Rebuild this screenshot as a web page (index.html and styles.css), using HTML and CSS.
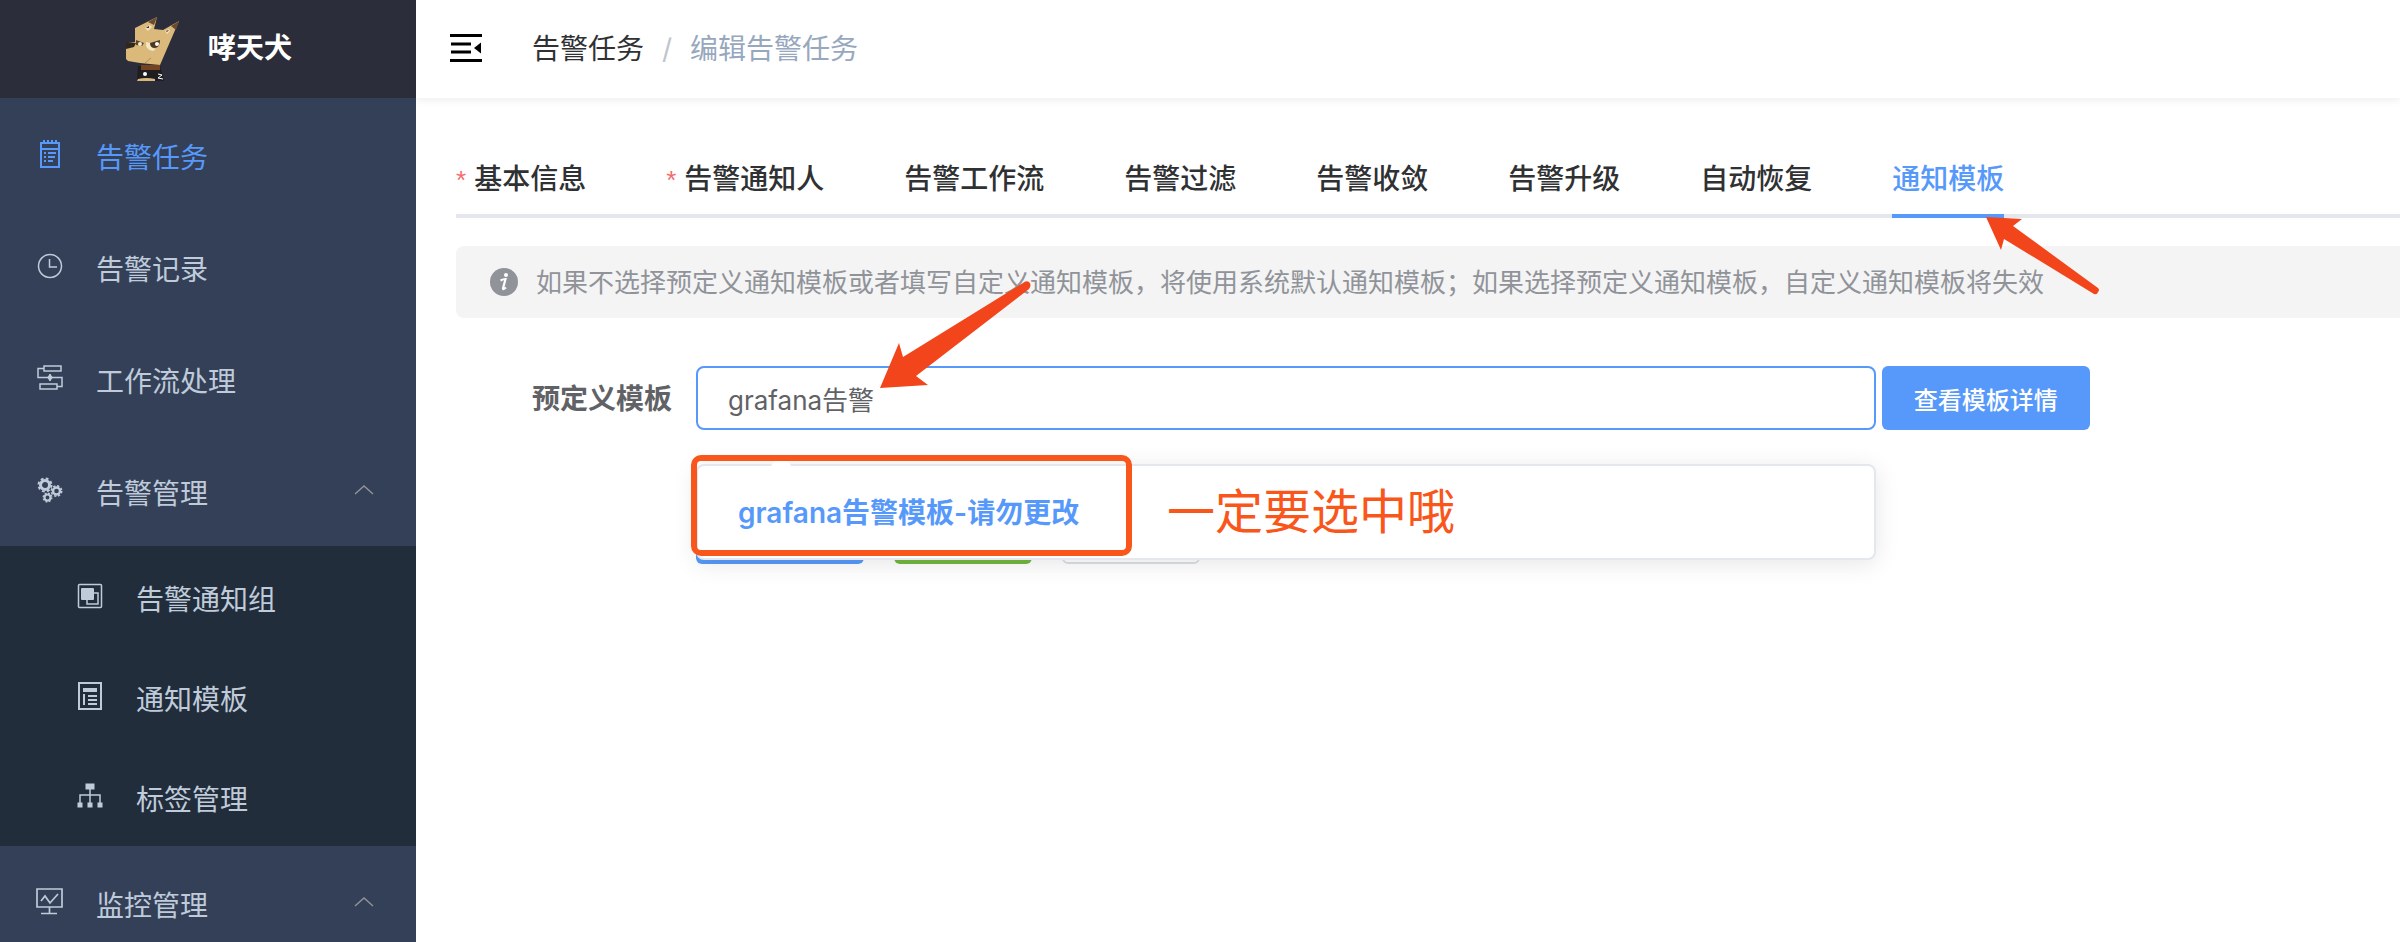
FILE: index.html
```html
<!DOCTYPE html>
<html lang="zh-CN">
<head>
    <meta charset="UTF-8">
    <meta name="viewport" content="width=device-width, initial-scale=1.0">
    <title>编辑告警任务</title>
    <link rel="stylesheet" href="styles.css">
</head>
<body>
    <div class="app">
        <aside class="sidebar">
            <div class="logo">
                <svg class="logo-img" width="54" height="64" viewBox="0 0 54 64">
                    <path d="M12 49h22l4 15H11z" fill="#1f1d20"/>
                    <path d="M12 62q8-2 17 0v2H11z" fill="#d8b77b"/>
                    <path d="M9 11L31 0l-3 12 9 1L53 4 34 48 14 46 2 44 0 42V26l9-1z" fill="#dab97a"/>
                    <path d="M31 0l-9 5 6 3zM53 4l-8 5 5 4z" fill="#6b4b2f"/>
                    <path d="M19 11l5-3 2 2-4 4zM39 14l4-2 1 2-3 3z" fill="#efe0bb"/>
                    <path d="M20 11l3-2v2zM40 14l3-1-2 2z" fill="#2c2b36"/>
                    <path d="M0 25l10 1-2 4-8 2z" fill="#2f261e"/>
                    <path d="M10 23l8 3-2 3-6-1z" fill="#5c452c"/>
                    <circle cx="14" cy="27" r="2" fill="#f4ebcb"/>
                    <path d="M20 25q-1 8 7 9l3-2q-6-1-6-6z" fill="#f2e7c2"/>
                    <path d="M24 26l10-3q0 7-5 8-5 0-5-5z" fill="#4b3724"/>
                    <circle cx="31" cy="27" r="2" fill="#fff"/>
                    <path d="M19 46l6-5" stroke="#b08d58" fill="none"/>
                    <path d="M15 48h19v5H15z" fill="#75431f"/>
                    <circle cx="19" cy="57" r="2" fill="#fff"/>
                    <path d="M32 57l4 1-4 3 5 1" stroke="#fff" fill="none"/>
                </svg>
                <h1 class="logo-title">哮天犬</h1>
            </div>
            <nav class="menu">
                <a class="menu-item active" href="#">
                    <svg class="icon" viewBox="0 0 28 28" fill="none" stroke="currentColor" stroke-width="2">
                        <path d="M5 3h18v24H5zM5 9h18M8 0v4M12 0v4M16 0v4M20 0v4"/>
                        <path d="M8 13h2M12 13h8M8 17h2M12 17h7M8 21h2M12 21h5"/>
                    </svg>
                    <span>告警任务</span>
                </a>
                <a class="menu-item" href="#">
                    <svg class="icon" viewBox="0 0 28 28" fill="none" stroke="currentColor" stroke-width="1.5">
                        <circle cx="14" cy="14" r="11.500"/>
                        <path d="M13.500 7v8H21"/>
                    </svg>
                    <span>告警记录</span>
                </a>
                <a class="menu-item" href="#">
                    <svg class="icon" viewBox="0 0 28 28" fill="none" stroke="currentColor" stroke-width="1.5">
                        <path d="M8 2h17v5H8zM4 20h17v5H4zM8 4.500H2v9h24v9h-5M14 10v7"/>
                        <path d="M14 11l2 2.500-2 2.500-2-2.500z" fill="currentColor"/>
                    </svg>
                    <span>工作流处理</span>
                </a>
                <a class="menu-item" href="#">
                    <svg class="icon" viewBox="0 0 28 28" fill="none" stroke="currentColor">
                        <circle cx="9" cy="9" r="4.500" stroke-width="3"/>
                        <circle cx="9" cy="9" r="6.500" stroke-width="2" stroke-dasharray="2.800 2.300"/>
                        <circle cx="20.500" cy="15" r="3.500" stroke-width="2.400"/>
                        <circle cx="20.500" cy="15" r="5.200" stroke-width="1.600" stroke-dasharray="2.300 1.780"/>
                        <circle cx="11.500" cy="21.500" r="2.900" stroke-width="2"/>
                        <circle cx="11.500" cy="21.500" r="4.300" stroke-width="1.400" stroke-dasharray="1.900 1.470"/>
                    </svg>
                    <span>告警管理</span>
                    <svg class="arrow-up" viewBox="0 0 20 12" fill="none" stroke="#909399" stroke-width="1.500"><path d="M1 10l9-8 9 8"/></svg>
                </a>
                <div class="submenu">
                    <a class="menu-item" href="#">
                        <svg class="icon" viewBox="0 0 28 28" fill="none" stroke="currentColor" stroke-width="1.500">
                            <rect x="2.500" y="2.500" width="23" height="23" rx="1"/>
                            <rect x="5" y="6" width="13" height="12" rx="1" fill="currentColor" stroke="none"/>
                            <path d="M18 11h4v11H11v-4"/>
                        </svg>
                        <span>告警通知组</span>
                    </a>
                    <a class="menu-item" href="#">
                        <svg class="icon" viewBox="0 0 28 28" fill="none" stroke="currentColor" stroke-width="2">
                            <path d="M3 1h22v26H3z"/>
                            <path d="M7 8h14" stroke-width="4"/>
                            <path d="M8 12v11M12 14h9M12 18h9M12 22h9"/>
                        </svg>
                        <span>通知模板</span>
                    </a>
                    <a class="menu-item" href="#">
                        <svg class="icon" viewBox="0 0 28 28" fill="none" stroke="currentColor" stroke-width="1.500">
                            <path d="M14 7v14M4 21v-8h20v8"/>
                            <path d="M9.500 1.500h9v6h-9zM1.500 20.500h5v5h-5zM11.500 20.500h5v5h-5zM21.500 20.500h5v5h-5z" fill="currentColor" stroke="none"/>
                        </svg>
                        <span>标签管理</span>
                    </a>
                </div>
                <a class="menu-item" href="#">
                    <svg class="icon" viewBox="0 0 28 28" fill="none" stroke="currentColor" stroke-width="1.700">
                        <path d="M1 1h25v18H1zM13.500 19v6M5 25.500h16M5 13l4-5 5 7 8-9"/>
                    </svg>
                    <span>监控管理</span>
                    <svg class="arrow-up" viewBox="0 0 20 12" fill="none" stroke="#909399" stroke-width="1.500"><path d="M1 10l9-8 9 8"/></svg>
                </a>
            </nav>
        </aside>

        <main class="main">
            <header class="navbar">
                <button type="button" class="hamburger" aria-label="菜单">
                    <svg width="32" height="28" viewBox="0 0 32 28" fill="none" stroke="#000" stroke-width="3">
                        <path d="M0 1.500h32M1 10h20M1 18h20M0 26.500h32"/>
                        <path d="M24 14l7-5.500v11z" fill="#000" stroke="none"/>
                    </svg>
                </button>
                <div class="breadcrumb">
                    <a href="#">告警任务</a>
                    <span class="separator">/</span>
                    <span class="current">编辑告警任务</span>
                </div>
            </header>

            <section class="content">
                <div class="tabs">
                    <a class="tab required" href="#">基本信息</a>
                    <a class="tab required" href="#">告警通知人</a>
                    <a class="tab" href="#">告警工作流</a>
                    <a class="tab" href="#">告警过滤</a>
                    <a class="tab" href="#">告警收敛</a>
                    <a class="tab" href="#">告警升级</a>
                    <a class="tab" href="#">自动恢复</a>
                    <a class="tab active" href="#">通知模板</a>
                </div>

                <div class="alert">
                    <svg width="28" height="28" viewBox="0 0 28 28">
                        <circle cx="14" cy="14" r="14" fill="#909399"/>
                        <circle cx="16" cy="7" r="2" fill="#fff"/>
                        <path d="M10.500 12.500q3-1.500 5-1.500l-2.500 9.500q0 1.500 3-1" fill="none" stroke="#fff" stroke-width="2.200"/>
                    </svg>
                    <p>如果不选择预定义通知模板或者填写自定义通知模板，将使用系统默认通知模板；如果选择预定义通知模板，自定义通知模板将失效</p>
                </div>

                <form class="form">
                    <div class="form-item">
                        <label for="template">预定义模板</label>
                        <div class="select">
                            <input type="text" id="template" class="select-input" value="grafana告警">
                            <div class="dropdown">
                                <div class="option">grafana告警模板-请勿更改</div>
                            </div>
                            <div class="mark-box"></div>
                            <div class="mark-text">一定要选中哦</div>
                            <svg class="mark-arrow mark-arrow-input" width="152" height="110" viewBox="0 0 152 110">
                                <path d="M0 108l19-45 4 14L143 3q3-3 6-1 3 3 0 7L36 96l12 9z" fill="#f3451b"/>
                            </svg>
                        </div>
                        <button type="button" class="btn btn-primary">查看模板详情</button>
                    </div>
                    <div class="form-actions">
                        <button type="button" class="btn btn-primary btn-wide"></button>
                        <button type="button" class="btn btn-success"></button>
                        <button type="button" class="btn btn-default"></button>
                    </div>
                </form>
                <svg class="mark-arrow mark-arrow-tab" width="114" height="78" viewBox="0 0 114 78">
                    <path d="M0 0l36 2-9 7 85 62q2 2 0 4-1 3-4 2L18 22l-3 11z" fill="#f3451b"/>
                </svg>
            </section>
        </main>
    </div>
</body>
</html>
```

FILE: styles.css
```css
* {
    margin: 0;
    padding: 0;
    box-sizing: border-box;
}

body {
    height: 100vh;
    overflow: hidden;
    background-color: #fff;
    font-family: Inter, "Noto Sans CJK SC", sans-serif;
    font-size: 28px;
    color: #303133;
}

a {
    color: inherit;
    text-decoration: none;
}

button,
input {
    font-family: inherit;
}

.app {
    display: flex;
    height: 100vh;
}

/* 侧边栏 */
.sidebar {
    flex: none;
    width: 416px;
    overflow: hidden;
    background-color: #344058;
}

.logo {
    display: flex;
    justify-content: center;
    align-items: center;
    gap: 28px;
    height: 98px;
    padding-left: 2px;
    background-color: #2b2d3a;
}

.logo-title {
    padding-bottom: 2px;
    font-size: 28px;
    font-weight: 600;
    line-height: 40px;
    color: #fff;
}

.menu-item {
    display: flex;
    align-items: center;
    height: 112px;
    padding: 0 42px 0 36px;
    color: #bfcbd9;
}

.menu-item span {
    margin-left: 32px;
    padding-top: 8px;
    line-height: 40px;
}

.menu-item.active {
    color: #5799fa;
}

.icon {
    flex: none;
    width: 28px;
    height: 28px;
}

.arrow-up {
    width: 20px;
    height: 12px;
    margin-left: auto;
}

.submenu {
    background-color: #222d3c;
}

.submenu .menu-item {
    height: 100px;
    padding-left: 76px;
}

/* 顶部导航 */
.main {
    flex: 1;
    min-width: 0;
}

.navbar {
    display: flex;
    align-items: center;
    gap: 50px;
    height: 98px;
    padding: 0 34px 2px;
    box-shadow: 0 2px 8px rgba(0, 21, 41, 0.08);
}

.hamburger {
    display: flex;
    border: none;
    background: none;
}

.breadcrumb {
    display: flex;
    align-items: baseline;
    gap: 18px;
    padding-top: 2px;
    line-height: 40px;
}

.separator {
    color: #c0c4cc;
}

.current {
    color: #97a8be;
}

/* 标签页 */
.content {
    position: relative;
    padding: 40px 0 0 40px;
}

.tabs {
    display: flex;
    gap: 80px;
    height: 80px;
    border-bottom: 4px solid #e4e7ed;
}

.tab {
    height: 80px;
    line-height: 82px;
    font-weight: 500;
}

.tab.active {
    border-bottom: 4px solid #5799fa;
    color: #5799fa;
}

.tab.required::before {
    content: "*";
    margin-right: 8px;
    font-family: "Liberation Sans", sans-serif;
    font-size: 26px;
    color: #f56c6c;
}

.alert {
    display: flex;
    align-items: center;
    gap: 18px;
    height: 72px;
    margin-top: 28px;
    padding: 0 34px;
    border-radius: 8px 0 0 8px;
    background-color: #f4f4f4;
    font-size: 26px;
    line-height: 38px;
    color: #909399;
}

.alert p {
    padding-top: 2px;
}

/* 表单 */
.form {
    padding-top: 48px;
}

.form-item {
    display: flex;
    align-items: center;
}

.form-item label {
    width: 240px;
    padding: 2px 24px 0 0;
    text-align: right;
    font-weight: 600;
    line-height: 40px;
    color: #606266;
}

.select {
    position: relative;
    width: calc(61% - 6px);
    margin-right: 6px;
}

.select-input {
    display: block;
    width: 100%;
    height: 64px;
    padding: 0 30px;
    border: 2px solid #5799fa;
    border-radius: 8px;
    outline: none;
    font-size: 26px;
    color: #606266;
}

.dropdown {
    position: absolute;
    top: 98px;
    left: 0;
    width: 100%;
    height: 96px;
    padding: 12px 0;
    border: 2px solid #e4e7ed;
    border-radius: 8px;
    background-color: #fff;
    box-shadow: 0 4px 24px rgba(0, 0, 0, 0.1);
}

.dropdown::before {
    content: "";
    position: absolute;
    top: -8px;
    left: 76px;
    width: 14px;
    height: 14px;
    background-color: #fff;
    transform: rotate(45deg);
}

.option {
    padding: 0 40px;
    line-height: 70px;
    font-weight: 600;
    color: #5799fa;
}

.btn {
    height: 64px;
    border: none;
    border-radius: 6px;
    font-size: 24px;
    font-weight: 500;
    color: #fff;
}

.btn-primary {
    padding: 0 32px;
    background-color: #5799fa;
}

.btn-success {
    width: 138px;
    background-color: #71b83f;
}

.btn-default {
    width: 138px;
    border: 2px solid #dcdfe6;
    background-color: #fff;
}

.btn-wide {
    width: 168px;
}

.form-actions {
    display: flex;
    gap: 30px;
    margin: 70px 0 0 240px;
}

/* 标注 */
.mark-box {
    position: absolute;
    top: 89px;
    left: -5px;
    width: 441px;
    height: 101px;
    border: 6px solid #f9561b;
    border-radius: 10px;
}

.mark-text {
    position: absolute;
    top: 110px;
    left: 471px;
    font-size: 48px;
    line-height: 72px;
    color: #f9561b;
}

.mark-arrow {
    position: absolute;
}

.mark-arrow-input {
    top: -86px;
    left: 184px;
}

.mark-arrow-tab {
    top: 119px;
    left: 1570px;
}
```
